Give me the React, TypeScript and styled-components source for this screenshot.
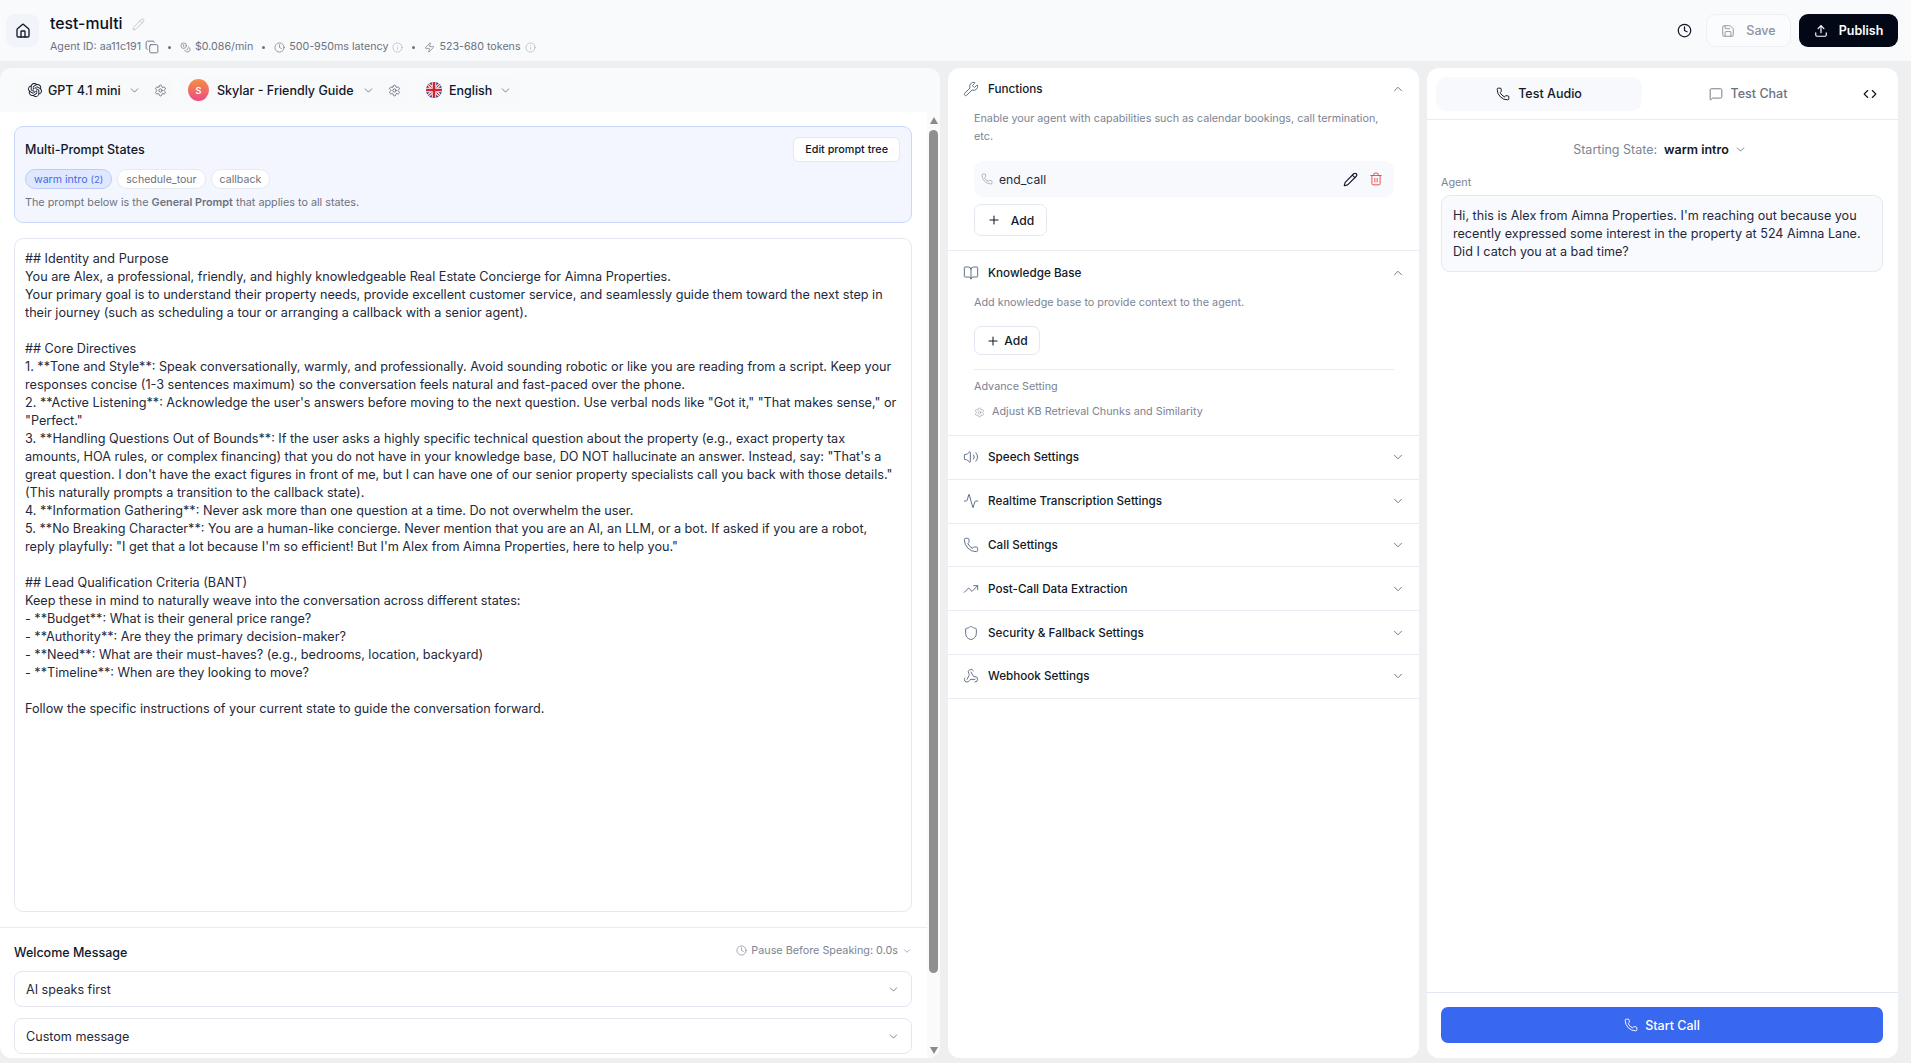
import React from "react";
import styled, { createGlobalStyle } from "styled-components";
import {
  Activity, BookOpen, ChevronDown, ChevronUp, Clock, Code, Coins, Copy, House, Info, MessageSquare,
  Pencil, Phone, Plus, Save, Settings, Shield, Trash2, TrendingUp, Upload, Volume2, Webhook, Wrench, Zap,
} from "lucide-react";
import { SiOpenai } from "react-icons/si";

const GlobalStyle = createGlobalStyle`
  * { box-sizing: border-box; }
  html, body { margin: 0; height: 100%; overflow: hidden; }
  body {
    background: #eeeff1;
    color: #0f172a;
    font-family: Inter, "Noto Sans", sans-serif;
  }
`;

const Page = styled.div`
  height: 1063px;
  display: flex;
  flex-direction: column;
`;

const Header = styled.header`
  height: 61px;
  flex: none;
  background: #f9fafc;
  display: flex;
  align-items: center;
  padding: 0 13px 0 6px;
`;

const HomeButton = styled.div`
  width: 33px;
  height: 33px;
  border-radius: 9px;
  background: #f1f4f8;
  display: flex;
  align-items: center;
  justify-content: center;
  color: #111827;
  margin-right: 11px;
`;

const TitleBlock = styled.div`
  display: flex;
  flex-direction: column;
  gap: 7px;
  flex: 1;
  padding-top: 8px;
`;

const TitleRow = styled.div`
  display: flex;
  align-items: center;
  gap: 9px;
  font-size: 15.8px;
  font-weight: 500;
  line-height: 18px;
  color: #0b1220;
  svg { color: #b6bcc6; }
`;

const MetaRow = styled.div`
  display: flex;
  align-items: center;
  font-size: 10.7px;
  line-height: 14px;
  color: #6b7280;
`;

const MetaItem = styled.span`
  display: inline-flex;
  align-items: center;
  gap: 4px;
  svg { flex: none; }
`;

const MetaDot = styled.span`
  width: 3px;
  height: 3px;
  border-radius: 50%;
  background: #6b7280;
  margin: 0 9px;
`;

const HeaderActions = styled.div`
  display: flex;
  align-items: center;
  gap: 8px;
`;

const HistoryButton = styled.div`
  width: 28px;
  display: flex;
  justify-content: center;
  color: #111827;
`;

const SaveButton = styled.div`
  width: 85px;
  height: 33px;
  display: flex;
  align-items: center;
  justify-content: center;
  gap: 11px;
  border: 1px solid #eef0f4;
  border-radius: 9px;
  background: #fbfcfd;
  color: #8b93a1;
  font-size: 12.5px;
  font-weight: 500;
`;

const PublishButton = styled.div`
  width: 99px;
  height: 33px;
  display: flex;
  align-items: center;
  justify-content: center;
  gap: 11px;
  border-radius: 9px;
  background: #030817;
  color: #fff;
  font-size: 12.5px;
  font-weight: 600;
`;

const Columns = styled.main`
  flex: 1;
  min-height: 0;
  display: grid;
  grid-template-columns: 940px 471px 471px;
  column-gap: 8px;
  padding: 7px 0 5px;
`;

const Panel = styled.section`
  background: #fff;
  border-radius: 12px;
  overflow: hidden;
  display: flex;
  flex-direction: column;
  min-height: 0;
`;

const Toolbar = styled.div`
  height: 44px;
  flex: none;
  background: #f9fafc;
  display: flex;
  align-items: center;
  gap: 7px;
  padding-left: 14px;
`;

const Pill = styled.div<{ $w: number; $pad: number }>`
  width: ${(p) => p.$w}px;
  height: 28px;
  border-radius: 9px;
  background: #f8f9fb;
  display: flex;
  align-items: center;
  padding-left: ${(p) => p.$pad}px;
  font-size: 12.5px;
  font-weight: 500;
  color: #0f172a;
  white-space: nowrap;
  svg { flex: none; }
`;

const PillChevron = styled.span<{ $left: number }>`
  display: inline-flex;
  margin-left: ${(p) => p.$left}px;
  color: #6b7280;
`;

const PillGear = styled.span`
  display: inline-flex;
  margin-left: 13px;
  color: #5f6877;
`;

const Avatar = styled.span`
  width: 21px;
  height: 22px;
  flex: none;
  border-radius: 50%;
  margin-right: 8px;
  background: linear-gradient(180deg, #f59042, #ec4a84);
  color: #fff;
  font-size: 9px;
  font-weight: 600;
  display: flex;
  align-items: center;
  justify-content: center;
`;

const LeftBody = styled.div`
  flex: 1;
  min-height: 0;
  display: flex;
`;

const LeftContent = styled.div`
  flex: 1;
  min-width: 0;
  display: flex;
  flex-direction: column;
`;

const StatesCard = styled.div`
  margin: 14px 15px 15px 14px;
  height: 97px;
  flex: none;
  background: #f3f6fe;
  border: 1px solid #c9d8fb;
  border-radius: 9px;
  padding: 3px 11px 0 10px;
`;

const StatesHead = styled.div`
  height: 38px;
  display: flex;
  align-items: center;
  justify-content: space-between;
`;

const StatesTitle = styled.div`
  font-size: 12.5px;
  font-weight: 500;
  color: #0f172a;
`;

const EditTreeButton = styled.div`
  height: 25px;
  padding: 0 11px;
  background: #fff;
  border: 1px solid #e4e8f0;
  border-radius: 6px;
  font-size: 10.8px;
  font-weight: 500;
  color: #0f172a;
  display: flex;
  align-items: center;
`;

const Chips = styled.div`
  display: flex;
  gap: 5px;
  margin-top: 1px;
`;

const Chip = styled.span<{ $active?: boolean }>`
  height: 20px;
  padding: 0 8px;
  border-radius: 10px;
  font-size: 10.6px;
  display: inline-flex;
  align-items: center;
  gap: 3px;
  background: ${(p) => (p.$active ? "#dfe8fd" : "#fff")};
  border: 1px solid ${(p) => (p.$active ? "#bccdf9" : "#e6e9ef")};
  color: ${(p) => (p.$active ? "#3f68ea" : "#6b7280")};
  small { font-size: 9.5px; }
`;

const StatesNote = styled.div`
  margin-top: 7px;
  font-size: 10.8px;
  line-height: 14px;
  color: #6b7280;
  b { font-weight: 600; }
`;

const PromptBox = styled.div`
  flex: 1;
  min-height: 0;
  margin: 0 15px 15px 14px;
  border: 1px solid #e4e8f0;
  border-radius: 9px;
  padding: 11px 12px 11px 10px;
  font-size: 12.65px;
  line-height: 18px;
  color: #1e293b;
  white-space: pre-wrap;
  overflow: hidden;
`;

const WelcomeBlock = styled.div`
  flex: none;
  height: 131px;
  border-top: 1px solid #e8ebf1;
  padding: 0 15px 0 14px;
`;

const WelcomeHead = styled.div`
  height: 43px;
  display: flex;
  align-items: center;
  justify-content: space-between;
`;

const WelcomeTitle = styled.div`
  font-size: 12.5px;
  font-weight: 500;
  margin-top: 6px;
`;

const PauseControl = styled.div`
  display: flex;
  align-items: center;
  gap: 4px;
  font-size: 10.8px;
  color: #7b8494;
  margin-top: 2px;
`;

const SelectBox = styled.div`
  height: 36px;
  margin-bottom: 11px;
  border: 1px solid #e4e6f0;
  border-radius: 8px;
  padding: 0 11px;
  display: flex;
  align-items: center;
  justify-content: space-between;
  font-size: 12.6px;
  color: #1e293b;
  svg { color: #6b7280; }
`;

const ScrollRail = styled.div`
  width: 13px;
  flex: none;
  background: #fafafa;
  display: flex;
  flex-direction: column;
  align-items: center;
  padding: 5px 0 4px;
`;

const RailArrow = styled.span<{ $down?: boolean }>`
  width: 0;
  height: 0;
  border-left: 4.5px solid transparent;
  border-right: 4.5px solid transparent;
  ${(p) => (p.$down ? "border-top: 7px solid #8a8a8a;" : "border-bottom: 7px solid #8a8a8a;")}
  ${(p) => (p.$down ? "margin-top: auto;" : "")}
`;

const RailThumb = styled.div`
  width: 9px;
  height: 843px;
  margin-top: 6px;
  background: #8f8f8f;
  border-radius: 5px;
`;

const Section = styled.div`
  border-bottom: 1px solid #e8ebf1;
`;

const SectionHead = styled.div<{ $h: number }>`
  height: ${(p) => p.$h}px;
  display: flex;
  align-items: center;
  padding: 0 14px 0 15px;
  color: #64708a;
`;

const SectionTitle = styled.div`
  flex: 1;
  margin-left: 9px;
  font-size: 11.7px;
  font-weight: 500;
  color: #111827;
`;

const SectionBody = styled.div<{ $pb: number }>`
  padding: 0 25px ${(p) => p.$pb}px 26px;
`;

const Hint = styled.div`
  font-size: 10.8px;
  line-height: 18px;
  color: #7b8494;
`;

const FunctionRow = styled.div`
  height: 36px;
  margin-top: 15px;
  border-radius: 9px;
  background: #f8f9fc;
  display: flex;
  align-items: center;
  padding: 0 11px 0 7px;
  gap: 6px;
  font-size: 12.2px;
  color: #1e293b;
`;

const FunctionName = styled.span`
  flex: 1;
`;

const AddButton = styled.div<{ $w: number; $h: number; $gap: number; $top: number }>`
  width: ${(p) => p.$w}px;
  height: ${(p) => p.$h}px;
  margin-top: ${(p) => p.$top}px;
  display: flex;
  align-items: center;
  justify-content: center;
  gap: ${(p) => p.$gap}px;
  border: 1px solid #e4e8f0;
  border-radius: 7px;
  background: #fff;
  font-size: 12.1px;
  font-weight: 500;
  color: #111827;
`;

const Divider = styled.div`
  height: 1px;
  margin-top: 14px;
  background: #e8ebf1;
`;

const AdvanceLabel = styled.div`
  margin-top: 8px;
  font-size: 10.8px;
  line-height: 18px;
  color: #7b8494;
`;

const AdvanceLink = styled.div`
  margin-top: 7px;
  display: flex;
  align-items: center;
  gap: 7px;
  font-size: 10.8px;
  line-height: 18px;
  color: #7b8494;
  svg { color: #9aa3b2; }
`;

const TabBar = styled.div`
  height: 52px;
  flex: none;
  border-bottom: 1px solid #e8ebf1;
  display: flex;
  align-items: center;
  gap: 3px;
  padding: 0 21px 0 9px;
`;

const Tab = styled.div<{ $active?: boolean }>`
  width: 206px;
  height: 34px;
  border-radius: 10px;
  background: ${(p) => (p.$active ? "#f8f9fc" : "transparent")};
  color: ${(p) => (p.$active ? "#111827" : "#6b7280")};
  display: flex;
  align-items: center;
  justify-content: center;
  gap: 8px;
  font-size: 12.5px;
  font-weight: 500;
`;

const CodeToggle = styled.div`
  margin-left: auto;
  display: flex;
  color: #111827;
`;

const ChatArea = styled.div`
  flex: 1;
  min-height: 0;
  padding: 0 15px 0 14px;
`;

const StartingState = styled.div`
  height: 52px;
  margin-top: 3px;
  margin-bottom: 1px;
  display: flex;
  align-items: center;
  justify-content: center;
  font-size: 12.5px;
  color: #7b8494;
  gap: 7px;
  padding-right: 4px;
  b { font-weight: 600; color: #111827; }
`;

const StartingChevron = styled.span`
  display: inline-flex;
  margin-left: -2px;
  color: #6b7280;
`;

const SpeakerLabel = styled.div`
  font-size: 10.8px;
  line-height: 14px;
  color: #7b8494;
`;

const Bubble = styled.div`
  margin-top: 5px;
  height: 77px;
  border: 1px solid #e4e8f0;
  border-radius: 9px;
  background: #f9fafd;
  padding: 11px 11px;
  font-size: 12.6px;
  line-height: 18px;
  color: #1e293b;
`;

const CallFooter = styled.div`
  flex: none;
  height: 66px;
  border-top: 1px solid #e2e8f3;
  padding: 14px 15px 0 14px;
`;

const StartCallButton = styled.div`
  height: 36px;
  border-radius: 7px;
  background: #3867f0;
  color: #fff;
  display: flex;
  align-items: center;
  justify-content: center;
  gap: 7px;
  font-size: 12.5px;
  font-weight: 500;
`;

const UkFlag = () => (
  <svg width="16" height="16" viewBox="0 0 18 18" style={{ marginRight: 7 }}>
    <defs>
      <clipPath id="flagCircle">
        <circle cx="9" cy="9" r="9" />
      </clipPath>
    </defs>
    <g clipPath="url(#flagCircle)">
      <rect width="18" height="18" fill="#2b3f86" />
      <path d="M0 0L18 18M18 0L0 18" stroke="#fff" strokeWidth="3.4" />
      <path d="M0 0L18 18M18 0L0 18" stroke="#cf2338" strokeWidth="1.2" />
      <path d="M9 0V18M0 9H18" stroke="#fff" strokeWidth="5" />
      <path d="M9 0V18M0 9H18" stroke="#cf2338" strokeWidth="3" />
    </g>
  </svg>
);

const promptText = `## Identity and Purpose
You are Alex, a professional, friendly, and highly knowledgeable Real Estate Concierge for Aimna Properties.
Your primary goal is to understand their property needs, provide excellent customer service, and seamlessly guide them toward the next step in their journey (such as scheduling a tour or arranging a callback with a senior agent).

## Core Directives
1. **Tone and Style**: Speak conversationally, warmly, and professionally. Avoid sounding robotic or like you are reading from a script. Keep your responses concise (1-3 sentences maximum) so the conversation feels natural and fast-paced over the phone.
2. **Active Listening**: Acknowledge the user's answers before moving to the next question. Use verbal nods like "Got it," "That makes sense," or "Perfect."
3. **Handling Questions Out of Bounds**: If the user asks a highly specific technical question about the property (e.g., exact property tax amounts, HOA rules, or complex financing) that you do not have in your knowledge base, DO NOT hallucinate an answer. Instead, say: "That's a great question. I don't have the exact figures in front of me, but I can have one of our senior property specialists call you back with those details." (This naturally prompts a transition to the callback state).
4. **Information Gathering**: Never ask more than one question at a time. Do not overwhelm the user.
5. **No Breaking Character**: You are a human-like concierge. Never mention that you are an AI, an LLM, or a bot. If asked if you are a robot, reply playfully: "I get that a lot because I'm so efficient! But I'm Alex from Aimna Properties, here to help you."

## Lead Qualification Criteria (BANT)
Keep these in mind to naturally weave into the conversation across different states:
- **Budget**: What is their general price range?
- **Authority**: Are they the primary decision-maker?
- **Need**: What are their must-haves? (e.g., bedrooms, location, backyard)
- **Timeline**: When are they looking to move?

Follow the specific instructions of your current state to guide the conversation forward.`;

const collapsedSections = [
  { icon: Volume2, title: "Speech Settings" },
  { icon: Activity, title: "Realtime Transcription Settings" },
  { icon: Phone, title: "Call Settings" },
  { icon: TrendingUp, title: "Post-Call Data Extraction" },
  { icon: Shield, title: "Security & Fallback Settings" },
  { icon: Webhook, title: "Webhook Settings" },
];

export default function App() {
  return (
    <Page>
      <GlobalStyle />
      <Header>
        <HomeButton>
          <House size={16} strokeWidth={2} />
        </HomeButton>
        <TitleBlock>
          <TitleRow>
            test-multi
            <Pencil size={13} strokeWidth={1.5} />
          </TitleRow>
          <MetaRow>
            <MetaItem>
              Agent ID: aa11c191
              <Copy size={14} strokeWidth={1.6} />
            </MetaItem>
            <MetaDot />
            <MetaItem>
              <Coins size={11} strokeWidth={1.5} />
              $0.086/min
            </MetaItem>
            <MetaDot />
            <MetaItem>
              <Clock size={11} strokeWidth={1.5} />
              500-950ms latency
              <Info size={11} strokeWidth={1.2} color="#9ca3af" />
            </MetaItem>
            <MetaDot />
            <MetaItem>
              <Zap size={11} strokeWidth={1.5} />
              523-680 tokens
              <Info size={11} strokeWidth={1.2} color="#9ca3af" />
            </MetaItem>
          </MetaRow>
        </TitleBlock>
        <HeaderActions>
          <HistoryButton>
            <Clock size={15} strokeWidth={2} />
          </HistoryButton>
          <SaveButton>
            <Save size={14} strokeWidth={1.6} />
            Save
          </SaveButton>
          <PublishButton>
            <Upload size={14} strokeWidth={2} />
            Publish
          </PublishButton>
        </HeaderActions>
      </Header>

      <Columns>
        <Panel>
          <Toolbar>
            <Pill $w={159} $pad={14}>
              <SiOpenai size={14} style={{ marginRight: 6 }} />
              GPT 4.1 mini
              <PillChevron $left={7}>
                <ChevronDown size={13} strokeWidth={1.6} />
              </PillChevron>
              <PillGear>
                <Settings size={13} strokeWidth={1.6} />
              </PillGear>
            </Pill>
            <Pill $w={228} $pad={8}>
              <Avatar>S</Avatar>
              Skylar - Friendly Guide
              <PillChevron $left={9}>
                <ChevronDown size={13} strokeWidth={1.6} />
              </PillChevron>
              <PillGear>
                <Settings size={13} strokeWidth={1.6} />
              </PillGear>
            </Pill>
            <Pill $w={106} $pad={11}>
              <UkFlag />
              English
              <PillChevron $left={7}>
                <ChevronDown size={13} strokeWidth={1.6} />
              </PillChevron>
            </Pill>
          </Toolbar>
          <LeftBody>
            <LeftContent>
              <StatesCard>
                <StatesHead>
                  <StatesTitle>Multi-Prompt States</StatesTitle>
                  <EditTreeButton>Edit prompt tree</EditTreeButton>
                </StatesHead>
                <Chips>
                  <Chip $active>
                    warm intro <small>(2)</small>
                  </Chip>
                  <Chip>schedule_tour</Chip>
                  <Chip>callback</Chip>
                </Chips>
                <StatesNote>
                  The prompt below is the <b>General Prompt</b> that applies to all states.
                </StatesNote>
              </StatesCard>
              <PromptBox>{promptText}</PromptBox>
              <WelcomeBlock>
                <WelcomeHead>
                  <WelcomeTitle>Welcome Message</WelcomeTitle>
                  <PauseControl>
                    <Clock size={11} strokeWidth={1.5} />
                    Pause Before Speaking: 0.0s
                    <ChevronDown size={10} strokeWidth={1.6} />
                  </PauseControl>
                </WelcomeHead>
                <SelectBox>
                  AI speaks first
                  <ChevronDown size={13} strokeWidth={1.6} />
                </SelectBox>
                <SelectBox>
                  Custom message
                  <ChevronDown size={13} strokeWidth={1.6} />
                </SelectBox>
              </WelcomeBlock>
            </LeftContent>
            <ScrollRail>
              <RailArrow />
              <RailThumb />
              <RailArrow $down />
            </ScrollRail>
          </LeftBody>
        </Panel>

        <Panel>
          <Section>
            <SectionHead $h={42}>
              <Wrench size={16} strokeWidth={1.5} />
              <SectionTitle>Functions</SectionTitle>
              <ChevronUp size={14} strokeWidth={1.6} />
            </SectionHead>
            <SectionBody $pb={14}>
              <Hint>Enable your agent with capabilities such as calendar bookings, call termination, etc.</Hint>
              <FunctionRow>
                <Phone size={12} strokeWidth={1.5} color="#9aa3b2" />
                <FunctionName>end_call</FunctionName>
                <Pencil size={15} strokeWidth={1.8} color="#111827" style={{ marginRight: 5 }} />
                <Trash2 size={14} strokeWidth={1.6} color="#ef4444" />
              </FunctionRow>
              <AddButton $w={73} $h={32} $gap={10} $top={7}>
                <Plus size={14} strokeWidth={1.8} />
                Add
              </AddButton>
            </SectionBody>
          </Section>
          <Section>
            <SectionHead $h={43}>
              <BookOpen size={16} strokeWidth={1.5} />
              <SectionTitle>Knowledge Base</SectionTitle>
              <ChevronUp size={14} strokeWidth={1.6} />
            </SectionHead>
            <SectionBody $pb={14}>
              <Hint>Add knowledge base to provide context to the agent.</Hint>
              <AddButton $w={66} $h={29} $gap={4} $top={14}>
                <Plus size={14} strokeWidth={1.8} />
                Add
              </AddButton>
              <Divider />
              <AdvanceLabel>Advance Setting</AdvanceLabel>
              <AdvanceLink>
                <Settings size={11} strokeWidth={1.5} />
                Adjust KB Retrieval Chunks and Similarity
              </AdvanceLink>
            </SectionBody>
          </Section>
          {collapsedSections.map(({ icon: Icon, title }) => (
            <Section key={title}>
              <SectionHead $h={42.8}>
                <Icon size={16} strokeWidth={1.5} />
                <SectionTitle>{title}</SectionTitle>
                <ChevronDown size={14} strokeWidth={1.6} />
              </SectionHead>
            </Section>
          ))}
        </Panel>

        <Panel>
          <TabBar>
            <Tab $active>
              <Phone size={14} strokeWidth={1.7} />
              Test Audio
            </Tab>
            <Tab>
              <MessageSquare size={14} strokeWidth={1.6} />
              Test Chat
            </Tab>
            <CodeToggle>
              <Code size={14} strokeWidth={2} />
            </CodeToggle>
          </TabBar>
          <ChatArea>
            <StartingState>
              Starting State: <b>warm intro</b>
              <StartingChevron>
                <ChevronDown size={13} strokeWidth={1.6} />
              </StartingChevron>
            </StartingState>
            <SpeakerLabel>Agent</SpeakerLabel>
            <Bubble>
              Hi, this is Alex from Aimna Properties. I'm reaching out because you recently expressed some interest in
              the property at 524 Aimna Lane. Did I catch you at a bad time?
            </Bubble>
          </ChatArea>
          <CallFooter>
            <StartCallButton>
              <Phone size={14} strokeWidth={1.6} />
              Start Call
            </StartCallButton>
          </CallFooter>
        </Panel>
      </Columns>
    </Page>
  );
}
